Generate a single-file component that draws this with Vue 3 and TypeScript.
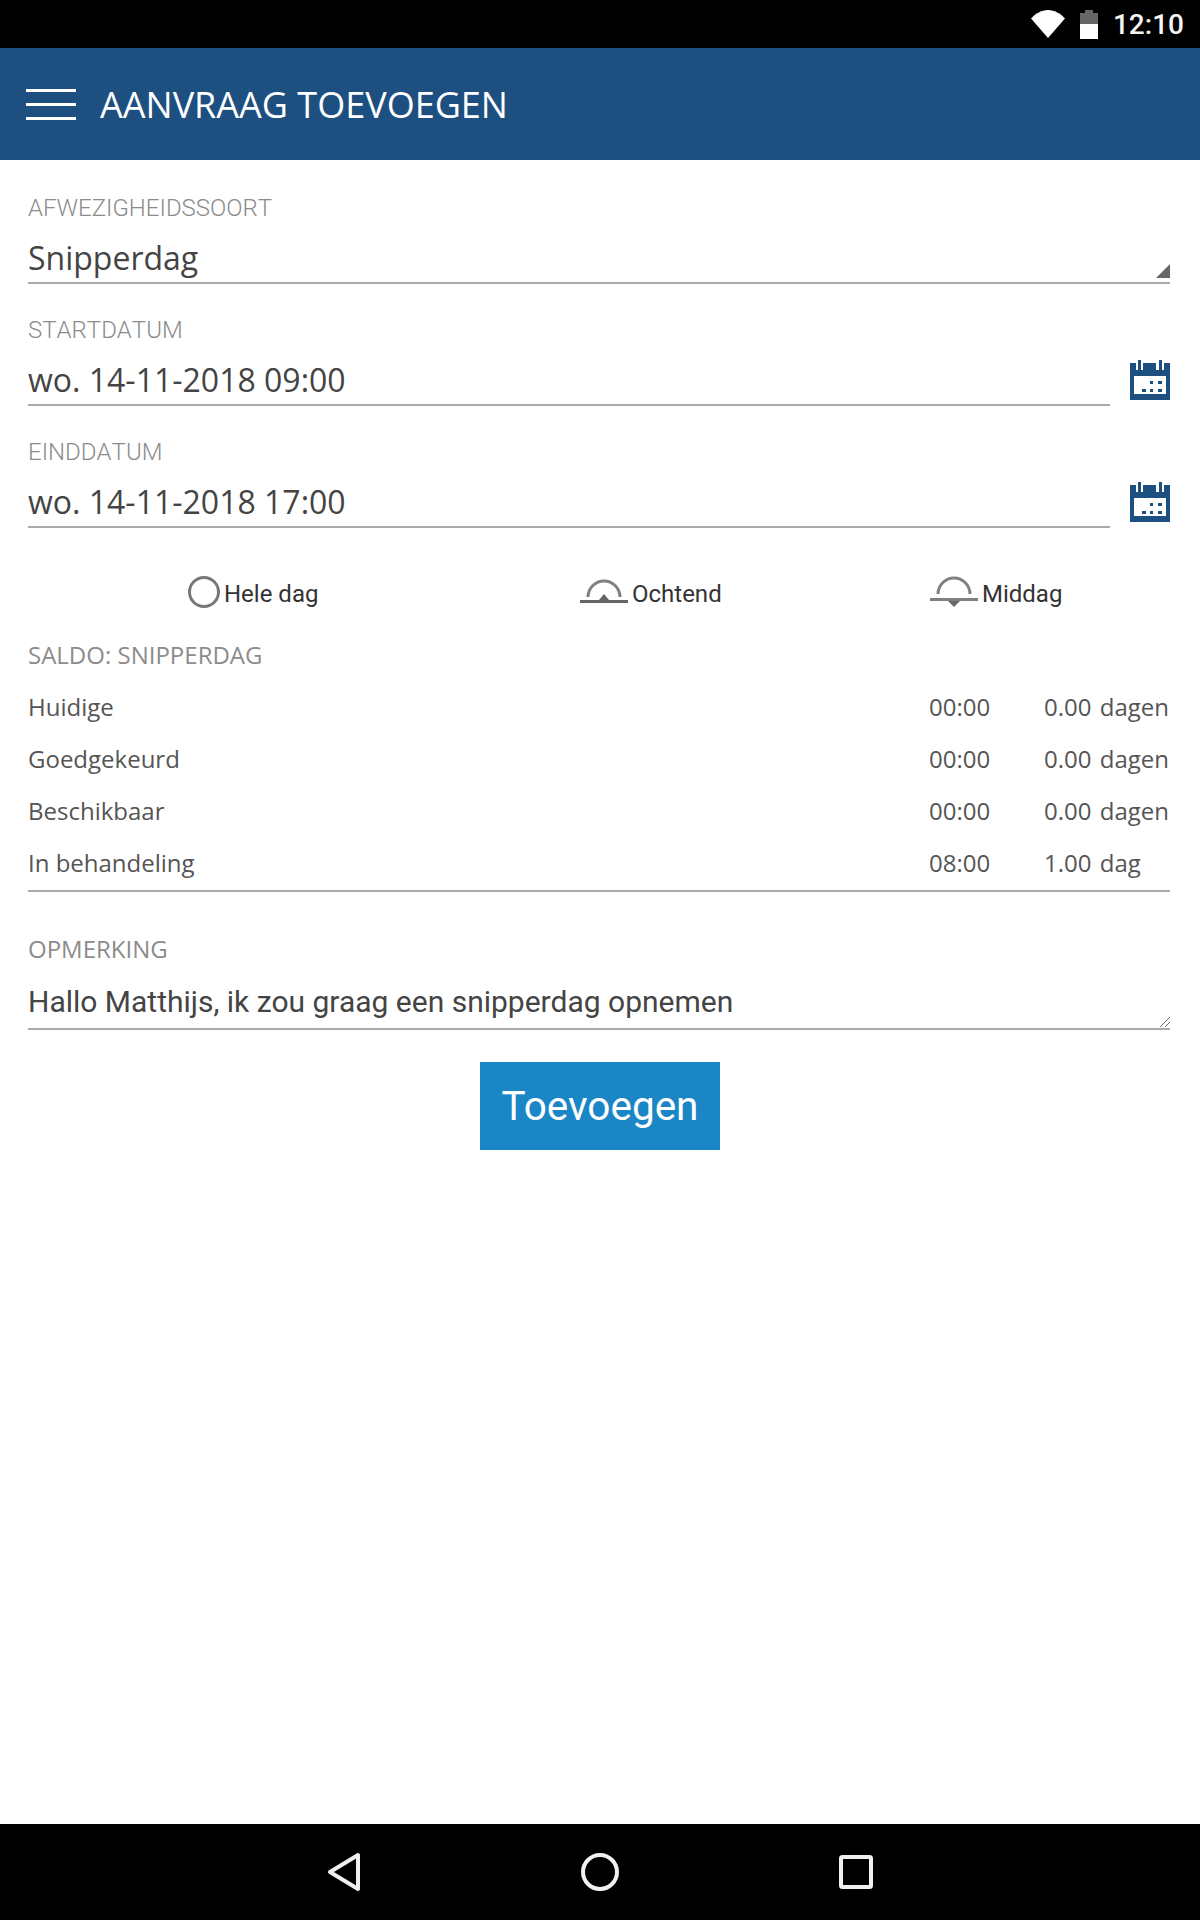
<template>
  <div class="screen">
    <div class="status-bar">
      <svg class="wifi" width="34" height="28" viewBox="0 0 34 28">
        <path d="M0 8.500C4.500 3.500 10.500 0 17 0s12.500 3.500 17 8.500L17 28z" fill="#fff" />
      </svg>
      <svg class="battery" width="18" height="29" viewBox="0 0 18 29">
        <path d="M5 0h8v3h5v11H0V3h5z" fill="#666" />
        <path d="M0 14h18v15H0z" fill="#fff" />
      </svg>
      <span class="clock">12:10</span>
    </div>

    <header class="app-header">
      <div class="burger"><span></span><span></span><span></span></div>
      <h1 class="title">AANVRAAG TOEVOEGEN</h1>
    </header>

    <main class="form">
      <div class="field">
        <div class="label label-light">AFWEZIGHEIDSSOORT</div>
        <div class="value select-value">
          Snipperdag
          <svg class="select-arrow" width="14" height="14" viewBox="0 0 14 14"><path d="M14 0v14H0z" fill="#666" /></svg>
        </div>
      </div>

      <div v-for="d in dates" :key="d.label" class="date-row">
        <div class="field date-field">
          <div class="label label-light">{{ d.label }}</div>
          <div class="value">{{ d.value }}</div>
        </div>
        <svg class="calendar" width="40" height="40" viewBox="0 0 40 40">
          <path d="M0 3h6v7h7V3h13v7h8V3h6v37H0z" fill="#1d4f80" />
          <rect x="8" y="0" width="3" height="10" fill="#1d4f80" />
          <rect x="29" y="0" width="3" height="10" fill="#1d4f80" />
          <rect x="4" y="16" width="32" height="18" fill="#fff" />
          <g fill="#1d4f80">
            <rect x="20" y="21" width="3" height="3" />
            <rect x="28" y="21" width="4" height="3" />
            <rect x="12" y="29" width="4" height="3" />
            <rect x="20" y="29" width="3" height="3" />
            <rect x="28" y="29" width="4" height="3" />
          </g>
        </svg>
      </div>

      <div class="day-parts">
        <div class="part">
          <svg width="32" height="32" viewBox="0 0 32 32"><circle cx="16" cy="16" r="14.500" fill="none" stroke="#777" stroke-width="3" /></svg>
          <span>Hele dag</span>
        </div>
        <div class="part">
          <svg width="48" height="26" viewBox="0 0 48 26">
            <path d="M8 18a16 16 0 0 1 32 0" fill="none" stroke="#808080" stroke-width="3" />
            <path d="M19 21l5-6 5 6z" fill="#666" />
            <rect x="0" y="21" width="48" height="3" fill="#666" />
          </svg>
          <span>Ochtend</span>
        </div>
        <div class="part">
          <svg width="48" height="32" viewBox="0 0 48 32">
            <path d="M8 18a16 16 0 0 1 32 0" fill="none" stroke="#808080" stroke-width="3" />
            <rect x="0" y="22" width="48" height="3" fill="#808080" />
            <path d="M18 25h12l-6 6z" fill="#666" />
          </svg>
          <span>Middag</span>
        </div>
      </div>

      <div class="label saldo-title">SALDO: SNIPPERDAG</div>
      <div class="saldo">
        <div v-for="r in saldo" :key="r.name" class="saldo-row">
          <span>{{ r.name }}</span>
          <span>{{ r.time }}</span>
          <span class="amount">{{ r.amount }}</span>
        </div>
      </div>

      <div class="label note-title">OPMERKING</div>
      <div class="note">
        Hallo Matthijs, ik zou graag een snipperdag opnemen
        <svg class="resize" width="10" height="10" viewBox="0 0 10 10">
          <path d="M0 10L10 0M5 10l5-5" stroke="#666" stroke-width="1" />
        </svg>
      </div>

      <button class="add-btn">Toevoegen</button>
    </main>

    <nav class="nav-bar">
      <svg width="34" height="40" viewBox="0 0 34 40"><path d="M31 3v34L3 20z" fill="none" stroke="#f0f0f0" stroke-width="4" stroke-linejoin="round" /></svg>
      <svg width="38" height="38" viewBox="0 0 38 38"><circle cx="19" cy="19" r="17" fill="none" stroke="#f0f0f0" stroke-width="4" /></svg>
      <svg width="34" height="34" viewBox="0 0 34 34"><rect x="2" y="2" width="30" height="30" rx="1.500" fill="none" stroke="#f0f0f0" stroke-width="4" /></svg>
    </nav>
  </div>
</template>

<script setup lang="ts">
type SaldoRow = { name: string; time: string; amount: string };

const dates = [
  { label: "STARTDATUM", value: "wo. 14-11-2018 09:00" },
  { label: "EINDDATUM", value: "wo. 14-11-2018 17:00" },
];

const saldo: SaldoRow[] = [
  { name: "Huidige", time: "00:00", amount: "0.00 dagen" },
  { name: "Goedgekeurd", time: "00:00", amount: "0.00 dagen" },
  { name: "Beschikbaar", time: "00:00", amount: "0.00 dagen" },
  { name: "In behandeling", time: "08:00", amount: "1.00 dag" },
];
</script>

<style>
html,
body {
  margin: 0;
  background: #fff;
}
</style>

<style scoped>
.screen {
  min-height: 100vh;
  display: flex;
  flex-direction: column;
  font-family: "Open Sans", sans-serif;
  color: #444;
}

.status-bar {
  height: 48px;
  background: #000;
  display: flex;
  align-items: center;
  justify-content: flex-end;
  padding-right: 16px;
  box-sizing: border-box;
}
.wifi {
  margin-right: 15px;
}
.battery {
  margin-right: 15px;
}
.clock {
  font-family: Roboto, sans-serif;
  font-size: 28px;
  font-weight: 500;
  color: #f4f4f4;
}

.app-header {
  height: 112px;
  background: #1d4f80;
  display: flex;
  align-items: center;
  padding-left: 26px;
}
.burger {
  width: 50px;
  height: 31px;
  display: flex;
  flex-direction: column;
  justify-content: space-between;
  margin-right: 24px;
}
.burger span {
  height: 3px;
  background: #fff;
}
.title {
  margin: 0;
  font-size: 36px;
  font-weight: 400;
  color: #fff;
}

.form {
  flex: 1;
  padding: 2px 30px 0 28px;
  display: flex;
  flex-direction: column;
}

.field {
  padding-top: 31px;
}
.label {
  font-size: 24px;
  line-height: 30px;
  color: #8c8c8c;
}
.label-light {
  font-family: Roboto, sans-serif;
  font-weight: 300;
  font-kerning: none;
}
.value {
  position: relative;
  margin-top: 13px;
  height: 46px;
  line-height: 44px;
  font-size: 32px;
  border-bottom: 2px solid #aaa;
}
.select-arrow {
  position: absolute;
  right: 0;
  bottom: 4px;
}

.date-row {
  display: flex;
  align-items: flex-end;
  gap: 20px;
}
.date-field {
  flex: 1;
}
.calendar {
  margin-bottom: 6px;
}

.day-parts {
  display: grid;
  grid-template-columns: 392px 350px 1fr;
  height: 40px;
  margin-top: 44px;
  padding-left: 160px;
  font-family: Roboto, sans-serif;
  font-size: 24px;
  color: #333;
}
.part {
  display: flex;
  align-items: center;
  gap: 4px;
}
.part span {
  padding-top: 3px;
}

.saldo-title {
  margin-top: 28px;
  margin-bottom: 11px;
}
.saldo {
  padding-bottom: 1px;
  border-bottom: 2px solid #aaa;
}
.saldo-row {
  display: grid;
  grid-template-columns: 1fr 115px 126px;
  height: 52px;
  line-height: 52px;
  font-size: 24px;
  color: #555;
}
.amount {
  word-spacing: 2px;
}

.note-title {
  margin-top: 42px;
}
.note {
  position: relative;
  margin-top: 19px;
  height: 45px;
  line-height: 38px;
  font-family: Roboto, sans-serif;
  font-size: 30px;
  border-bottom: 2px solid #aaa;
}
.resize {
  position: absolute;
  right: 0;
  bottom: 1px;
}

.add-btn {
  align-self: center;
  margin-top: 32px;
  margin-left: 2px;
  width: 240px;
  height: 88px;
  border: none;
  padding: 0;
  background: #1a86c6;
  color: #fff;
  font-family: Roboto, sans-serif;
  font-size: 40.500px;
}

.nav-bar {
  height: 96px;
  background: #000;
  display: flex;
  align-items: center;
  justify-content: center;
  gap: 220px;
}
</style>
